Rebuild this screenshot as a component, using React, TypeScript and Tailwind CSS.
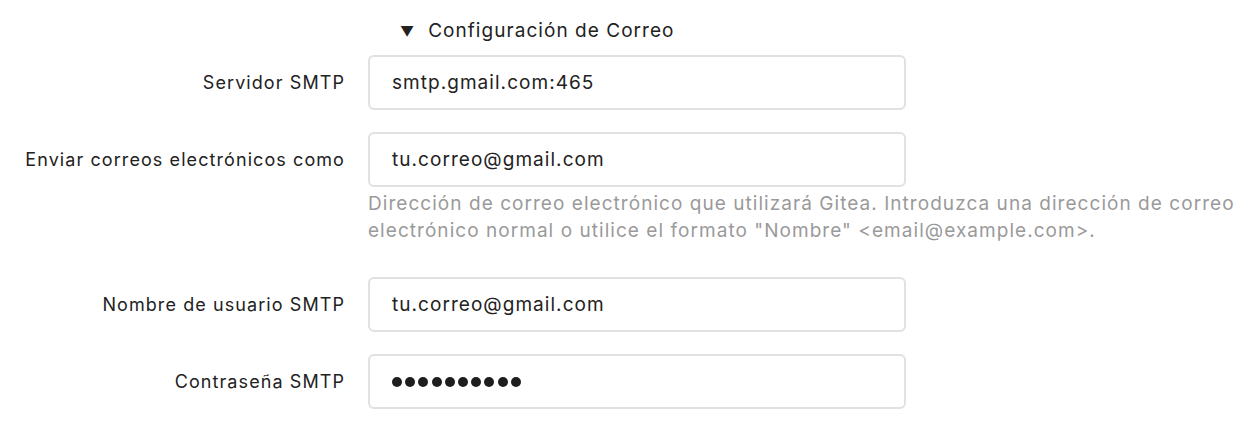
import React from "react";

function Field({ label, children, help }: { label: string; children: React.ReactNode; help?: React.ReactNode }) {
  return (
    <div className="flex items-start">
      <div className="w-[345px] shrink-0 h-[55px] flex items-center justify-end text-[18px] tracking-[0.06em] text-[#222] whitespace-nowrap">{label}</div>
      <div className="ml-[23px] flex flex-col">
        <div className="w-[538px] h-[55px] rounded-[6px] border-[2px] border-[#e1e1e1] bg-white flex items-center px-[22px] pt-[1px] text-[19px] tracking-[0.055em] text-[#222]">
          {children}
        </div>
        {help}
      </div>
    </div>
  );
}

export default function App() {
  return (
    <div className="w-[1256px] h-[424px] bg-white" style={{ fontFamily: "Inter, 'Noto Sans', sans-serif" }}>
      <div className="pt-[18px] pl-[400px] flex items-center text-[19px] tracking-[0.055em] text-[#222] h-[44px]">
        <span className="text-[14px] mr-[14px] tracking-normal">▼</span>
        <span>Configuración de Correo</span>
      </div>
      <div className="mt-[11px] flex flex-col gap-[22px]">
        <Field label="Servidor SMTP">smtp.gmail.com:465</Field>
        <Field
          label="Enviar correos electrónicos como"
          help={
            <div className="w-[880px] mt-[3px] mb-[11px] text-[19px] tracking-[0.055em] leading-[27px] text-[#9a9a9a]">
              Dirección de correo electrónico que utilizará Gitea. Introduzca una dirección de correo electrónico normal o utilice el formato "Nombre" &lt;email@example.com&gt;.
            </div>
          }
        >
          tu.correo@gmail.com
        </Field>
        <Field label="Nombre de usuario SMTP">tu.correo@gmail.com</Field>
        <Field label="Contraseña SMTP">
          <div className="flex gap-[3.2px]" aria-label="●●●●●●●●●●">
            {Array.from({ length: 10 }).map((_, i) => (
              <span key={i} className="w-[10px] h-[10px] rounded-full bg-[#1e1e1e]" />
            ))}
          </div>
        </Field>
      </div>
    </div>
  );
}
